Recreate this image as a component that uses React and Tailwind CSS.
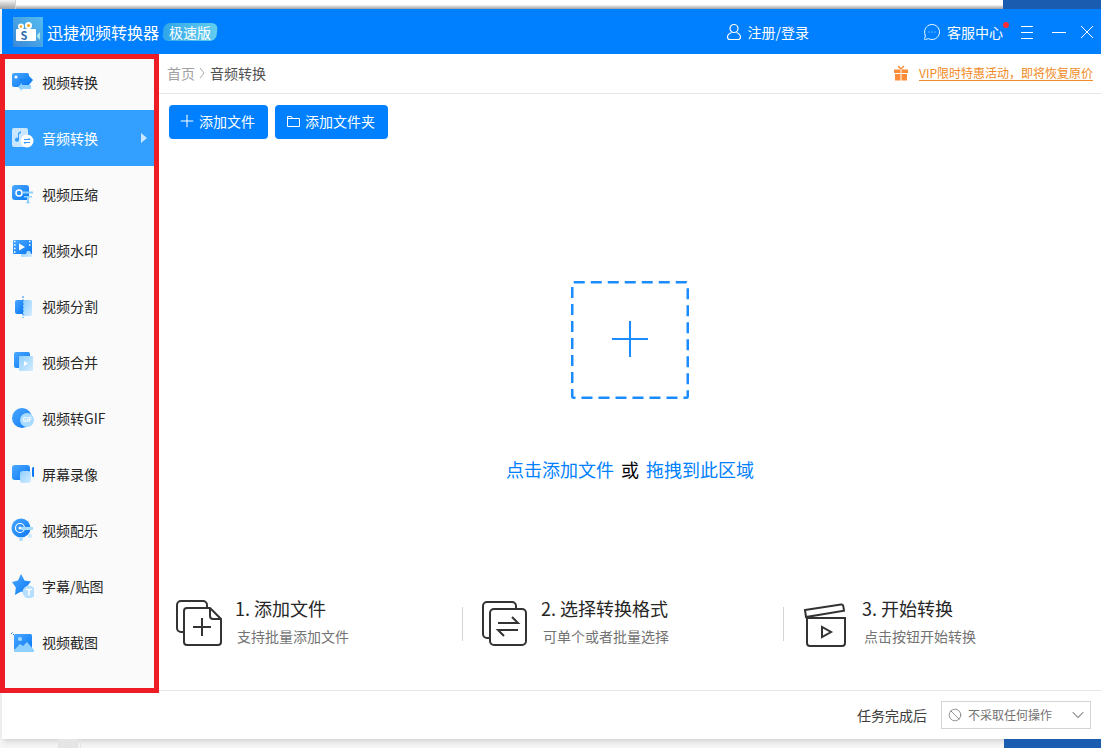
import { Ban, ChevronDown, MessageCircleMore, Plus } from "lucide-react";

// shared gradients for the sidebar icons
function IconDefs() {
  return (
    <svg className="absolute w-0 h-0">
      <defs>
        <linearGradient id="deep" x1="0" y1="0" x2="1" y2="1">
          <stop offset="0" stopColor="#4aa8ff" />
          <stop offset="1" stopColor="#0a78f5" />
        </linearGradient>
        <linearGradient id="light" x1="0" y1="0" x2="1" y2="1">
          <stop offset="0" stopColor="#8fd0ff" />
          <stop offset="1" stopColor="#d3ecff" />
        </linearGradient>
      </defs>
    </svg>
  );
}

const sidebarIcons = {
  convert: (
    <>
      <rect x="2" y="3" width="17" height="14" rx="2" fill="url(#deep)" />
      <circle cx="6" cy="7" r="1.5" fill="#fff" />
      <path d="M10 9h9V6l4 4-4 5v-3h-9z" fill="#1a86f5" />
      <path d="M21 15h-9v-2l-4 4 4 4v-2h9z" fill="#8fd0ff" />
    </>
  ),
  audio: (
    <>
      <rect x="2" y="2" width="16" height="19" rx="2" fill="#fff" fillOpacity=".75" />
      <path d="M8 7l3-2v2l-2 1v6a2 2 0 1 1-1-2z" fill="#33a0ff" />
      <circle cx="17" cy="15" r="6.5" fill="#fff" />
      <path d="M14 13.5h6M20 13.5l-1.500-1.500M20 16.500h-6M14 16.500l1.500 1.500" stroke="#33a0ff" strokeWidth="1" fill="none" />
    </>
  ),
  compress: (
    <>
      <rect x="2" y="3" width="17" height="15" rx="3" fill="url(#deep)" />
      <circle cx="9" cy="11" r="3" fill="none" stroke="#fff" strokeWidth="1.500" />
      <path d="M13 9.500h10v2H13z" fill="#8fd0ff" />
      <path d="M14 14h8v1.500h-3V20l1.500 0-2.500 2-2.500-2H17v-4.500h-3z" fill="#8fd0ff" />
    </>
  ),
  watermark: (
    <>
      <rect x="3" y="2" width="19" height="14" rx="1" fill="url(#deep)" />
      <path d="M4 3.500h1.500M4 7h1.500M4 10.500h1.500M4 14h1.500M19 3.500h1.500M19 7h1.500" stroke="#fff" strokeWidth="1.500" />
      <path d="M9 5.500l6 3.500-6 3.500z" fill="#fff" />
      <path d="M11 16h5l1-3h3l1 3h1v3H11z" fill="url(#light)" />
    </>
  ),
  split: (
    <>
      <path d="M13 6H7a2 2 0 0 0-2 2v10a2 2 0 0 0 2 2h6z" fill="url(#deep)" />
      <path d="M13 6h7a2 2 0 0 1 2 2v12a2 2 0 0 1-2 2h-7z" fill="url(#light)" />
      <path d="M13 2v22" stroke="#1a86f5" strokeWidth="1" strokeDasharray="2 1.500" />
    </>
  ),
  merge: (
    <>
      <rect x="4" y="2" width="16" height="16" rx="2" fill="url(#deep)" />
      <rect x="9" y="6" width="14" height="15" rx="1" fill="url(#light)" />
      <path d="M14 11l4 2.500-4 2.500z" fill="#fff" />
    </>
  ),
  gif: (
    <>
      <circle cx="12" cy="12" r="10" fill="url(#deep)" />
      <circle cx="17" cy="14" r="7" fill="#a9dbff" />
      <text x="17" y="16" fontSize="5.500" fontWeight="700" fill="#fff" textAnchor="middle">GIF</text>
    </>
  ),
  record: (
    <>
      <rect x="2" y="3" width="18" height="15" rx="3" fill="url(#deep)" />
      <rect x="10" y="9" width="11" height="12" rx="3" fill="url(#light)" />
      <rect x="22" y="5" width="3" height="10" rx="1.500" fill="#0a78f5" />
    </>
  ),
  music: (
    <>
      <circle cx="11" cy="10" r="9.500" fill="url(#deep)" />
      <circle cx="10" cy="10" r="4.500" fill="none" stroke="#fff" strokeWidth="1.200" />
      <circle cx="10" cy="10" r="1.500" fill="#fff" />
      <path d="M11 9h12v3H11z" fill="#a9dbff" />
      <circle cx="11" cy="21" r="2" fill="#a9dbff" />
      <circle cx="20" cy="18" r="2" fill="#cbe8ff" />
    </>
  ),
  sticker: (
    <>
      <path d="M11 0l3.500 6.500 6.500 1-4.500 5.500 1 7-6.500-2.500L5 21l.8-7.500L2 8l6-1.500z" fill="url(#deep)" strokeLinejoin="round" />
      <circle cx="19" cy="18" r="6.500" fill="#b5deff" />
      <path d="M16 15.500h6M19 15.500v6" stroke="#fff" strokeWidth="1.500" />
    </>
  ),
  capture: (
    <>
      <path d="M1 4l1.500-1.500M3 5l1-1" stroke="#1a86f5" strokeWidth="1" />
      <rect x="4" y="4" width="18" height="16" rx="1.500" fill="url(#deep)" />
      <circle cx="10" cy="9" r="2" fill="#a9dbff" />
      <path d="M4 20l6-6 3 2 4-4 7 8v2H4z" fill="#8fd0ff" />
    </>
  ),
};

const navItems = [
  { label: "视频转换", icon: "convert" },
  { label: "音频转换", icon: "audio", active: true },
  { label: "视频压缩", icon: "compress" },
  { label: "视频水印", icon: "watermark" },
  { label: "视频分割", icon: "split" },
  { label: "视频合并", icon: "merge" },
  { label: "视频转GIF", icon: "gif" },
  { label: "屏幕录像", icon: "record" },
  { label: "视频配乐", icon: "music" },
  { label: "字幕/贴图", icon: "sticker" },
  { label: "视频截图", icon: "capture" },
];

function NavItem({ label, icon, active }) {
  return (
    <div
      className={`flex h-14 items-center gap-2 pl-2 pr-3 text-sm ${
        active ? "bg-[#33a0ff] text-white" : "text-neutral-800"
      }`}
    >
      <svg viewBox="0 0 24 24" className="h-6 w-6 shrink-0">
        {sidebarIcons[icon]}
      </svg>
      <span>{label}</span>
      {active && (
        <svg viewBox="0 0 6 10" className="ml-auto h-2.5 w-1.5">
          <path d="M0 0l6 5-6 5z" fill="#fff" fillOpacity=".75" />
        </svg>
      )}
    </div>
  );
}

function Logo() {
  return (
    <svg viewBox="0 0 30 30" className="h-7.5 w-7.5 shrink-0">
      <defs>
        <linearGradient id="logoBg" x1="1" y1="0" x2="0" y2="1">
          <stop offset="0" stopColor="#55bcf0" />
          <stop offset="1" stopColor="#3a8ad8" />
        </linearGradient>
      </defs>
      <rect width="30" height="30" fill="url(#logoBg)" />
      <circle cx="8" cy="9.500" r="3" fill="#fff" />
      <circle cx="15.500" cy="8.500" r="3.500" fill="#fff" />
      <circle cx="8" cy="9.500" r="1.300" fill="#f5a623" />
      <circle cx="15.500" cy="8.500" r="1.600" fill="#f5a623" />
      <rect x="3" y="12" width="20" height="12" rx="1" fill="#fff" />
      <path d="M24 18l3-3v8l-3-3z" fill="#a5e6ee" />
      <text x="11" y="22.500" fontSize="11" fontWeight="700" fill="#2f6fb0" textAnchor="middle">S</text>
    </svg>
  );
}

function TitleBar() {
  return (
    <div className="flex h-11.25 items-center bg-[#0080ff] pl-2.75 pr-1.5 text-white">
      <Logo />
      <span className="ml-1 text-base">迅捷视频转换器</span>
      <span className="ml-1 flex h-4.5 -skew-x-6 items-center rounded-md bg-linear-to-r from-[#2ea6ea] to-[#62cdee] px-1.5 text-sm">
        <span className="skew-x-6">极速版</span>
      </span>

      <svg viewBox="0 0 16 18" fill="none" stroke="#fff" strokeWidth="1.200" className="ml-auto h-4.5 w-4">
        <circle cx="8" cy="5.500" r="4" />
        <path d="M5.500 9.500C3 10.500 1.500 12 1.500 14c0 1.500 1 2.500 2.500 2.500h8c1.500 0 2.500-1 2.500-2.500 0-2-1.500-3.500-4-4.500" />
      </svg>
      <span className="ml-1.5 text-sm">注册/登录</span>

      <MessageCircleMore className="ml-28.5 h-4.5 w-4.5" strokeWidth={1.25} />
      <span className="relative ml-1.5 text-sm">
        客服中心
        <span className="absolute -right-1.5 top-0 h-1.5 w-1.5 rounded-full bg-red-500" />
      </span>

      <svg viewBox="0 0 16 16" stroke="#fff" strokeWidth="1" className="ml-4 h-4 w-4">
        <path d="M2 2.500h12M2 8.500h12M2 14.500h12" />
      </svg>
      <svg viewBox="0 0 16 16" stroke="#fff" strokeWidth="1" className="ml-4 h-4 w-4">
        <path d="M1 8.500h14" />
      </svg>
      <svg viewBox="0 0 16 16" stroke="#fff" strokeWidth="1" className="ml-3 h-4 w-4">
        <path d="M2 2l12 12M14 2L2 14" />
      </svg>
    </div>
  );
}

function AddButton({ icon, className, children }) {
  return (
    <button className={`flex h-8.5 items-center rounded bg-[#0080ff] pb-0.5 pr-3.25 text-sm text-white ${className}`}>
      {icon}
      {children}
    </button>
  );
}

function Step({ className, title, desc, children }) {
  return (
    <div className={`flex items-start pl-4 ${className}`}>
      <svg viewBox="0 0 48 48" fill="none" stroke="#333" strokeWidth="2" className="mt-1 h-12 w-12 shrink-0">
        {children}
      </svg>
      <div className="-mt-px">
        <p className="text-lg leading-7 text-neutral-800">{title}</p>
        <p className="ml-0.5 mt-1 text-sm leading-5 text-neutral-500">{desc}</p>
      </div>
    </div>
  );
}

function Divider() {
  return <div className="mt-3 h-8.5 w-px shrink-0 bg-neutral-300" />;
}

function Main() {
  return (
    <div className="flex min-w-0 flex-1 flex-col">
      <div className="flex h-10 items-center border-b border-neutral-200 pb-0.5 pl-2 pr-2 text-sm">
        <span className="text-neutral-400">首页</span>
        <svg viewBox="0 0 6 10" fill="none" stroke="#aaa" className="mx-1 h-2.5 w-1.5">
          <path d="M1 0l4 5-4 5" />
        </svg>
        <span className="ml-px text-neutral-600">音频转换</span>

        <svg viewBox="0 0 16 16" className="ml-auto h-4 w-4" fill="#ff8c38">
          <path d="M1 4.500h6.500V8H1zM8.500 4.500H15V8H8.500zM2 9h5.500v6.500H2zM8.500 9H14v6.500H8.500z" />
          <path d="M8 4L5 1M8 4l3-3" stroke="#ff8c38" strokeWidth="1.500" />
        </svg>
        <span className="ml-2.5 text-xs text-[#f08a24] underline underline-offset-2">
          VIP限时特惠活动，即将恢复原价
        </span>
      </div>

      <div className="flex gap-1.75 px-2.5 pt-2.75">
        <AddButton className="pl-2" icon={<Plus className="mr-0.5 h-5 w-5" strokeWidth={1.25} />}>
          添加文件
        </AddButton>
        <AddButton
          className="pl-3"
          icon={
            <svg viewBox="0 0 14 14" fill="none" stroke="#fff" className="mr-1 h-3.5 w-3.5">
              <path d="M0.500 12.500v-10h4l1 2h7v8z M0.500 4.500h5" />
            </svg>
          }
        >
          添加文件夹
        </AddButton>
      </div>

      <div className="flex flex-1 flex-col items-center pt-35.5">
        <svg viewBox="0 0 118 118" fill="none" className="h-29.5 w-29.5">
          <rect x="1.250" y="1.250" width="115.500" height="115.500" rx="1.500" stroke="#1a8cff" strokeWidth="2.500" strokeDasharray="11 6" />
          <path d="M59 40v36M41 58h36" stroke="#1a8cff" strokeWidth="2" />
        </svg>
        <p className="mt-14 text-lg leading-7 text-[#0080ff]">
          点击添加文件 <span className="mx-0.75 text-black">或</span> 拖拽到此区域
        </p>
      </div>

      <div className="flex pb-10.75">
        <Step className="w-75.75 gap-3" title="1. 添加文件" desc="支持批量添加文件">
          <path d="M9 33H6a4 4 0 0 1-4-4V6a4 4 0 0 1 4-4h22a4 4 0 0 1 4 4v3" />
          <path d="M12 9h23l11 11v23a3 3 0 0 1-3 3H12a3 3 0 0 1-3-3V12a3 3 0 0 1 3-3z" />
          <path d="M35 9v8a3 3 0 0 0 3 3h8M27 19v18M18 28h18" />
        </Step>
        <Divider />
        <Step className="w-80 gap-3.5" title="2. 选择转换格式" desc="可单个或者批量选择">
          <path d="M11 39H8a4 4 0 0 1-4-4V7a4 4 0 0 1 4-4h25a4 4 0 0 1 4 4v3" />
          <rect x="11" y="10" width="36" height="36" rx="4" />
          <path d="M19 24h20l-6-6M39 31H19l6 6" />
        </Step>
        <Divider />
        <Step className="flex-1 gap-3.5" title="3. 开始转换" desc="点击按钮开始转换">
          <path d="M5 11l36-5.500a2 2 0 0 1 2.300 1.700l.7 4.500L6 18z" />
          <path d="M7 19h38v25a3 3 0 0 1-3 3H10a3 3 0 0 1-3-3z" />
          <path d="M22 28v10l9-5z" />
        </Step>
      </div>
    </div>
  );
}

function Footer() {
  return (
    <div className="flex h-12.25 items-center justify-end gap-3.5 border-t border-neutral-200 pr-2.5">
      <span className="text-sm text-neutral-700">任务完成后</span>
      <div className="flex h-7 w-37.5 items-center border border-neutral-300 pl-1.5 pr-0.5 text-xs text-neutral-500">
        <Ban className="h-3.5 w-3.5" strokeWidth={1.25} />
        <span className="ml-1.5">不采取任何操作</span>
        <ChevronDown className="ml-auto h-5 w-5 text-neutral-500" strokeWidth={1.25} />
      </div>
    </div>
  );
}

export default function App() {
  return (
    <div className="relative h-187 w-full overflow-hidden bg-neutral-100 [font-family:'Noto_Sans_CJK_SC','Noto_Sans',sans-serif]">
      <IconDefs />

      {/* desktop peeking out above the window */}
      <div className="flex h-2.25">
        <div className="w-4 border-r border-neutral-300 bg-linear-to-b from-neutral-100 to-neutral-400" />
        <div className="flex-1 bg-linear-to-b from-white via-white to-neutral-400" />
        <div className="w-24.5 bg-[#1a5cb0]" />
      </div>

      <div className="ml-0.5 flex h-182.5 flex-col bg-white shadow-md">
        <TitleBar />
        <div className="flex min-h-0 flex-1">
          <div className="w-39.25 shrink-0 bg-neutral-50">
            {navItems.map((item) => (
              <NavItem key={item.label} {...item} />
            ))}
          </div>
          <Main />
        </div>
        <Footer />
      </div>

      <div className="flex h-2.25">
        <div className="ml-14.5 w-5 bg-neutral-200" />
        <div className="ml-0.5 flex-1 border-l border-neutral-200" />
        <div className="w-24.25 bg-[#1a5cb0]" />
      </div>

      {/* red annotation box drawn over the sidebar */}
      <div className="absolute left-0 top-13.5 h-159.75 w-39.75 border-5 border-[#ee1c25]" />
    </div>
  );
}
